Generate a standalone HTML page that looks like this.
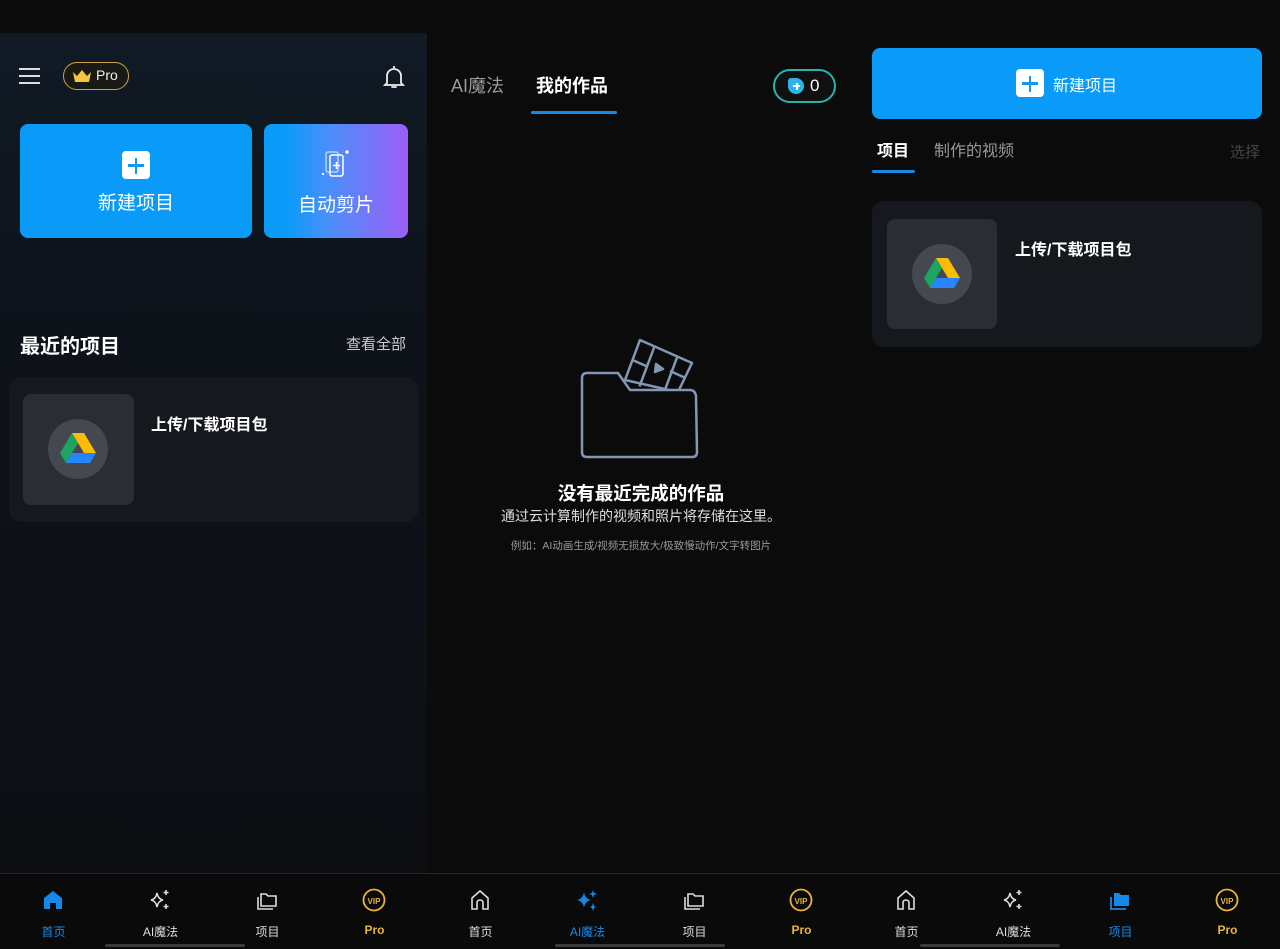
<!DOCTYPE html>
<html><head><meta charset="utf-8"><style>
*{margin:0;padding:0;box-sizing:border-box}
body{width:1280px;height:949px;background:#0b0b0b;position:relative;overflow:hidden;font-family:"Liberation Sans","Noto Sans CJK SC",sans-serif;color:#fff}
.a{position:absolute}
.left{left:0;top:33px;width:427px;height:840px;background:linear-gradient(#111a25,#0e1219 40%,#0c0e12)}
.card{background:#15181d;border-radius:12px}
.thumb{background:#2a2d33;border-radius:8px}
.nav{left:0;top:873px;width:1280px;height:76px;background:#0a0a0a;border-top:1px solid #262626}
.ni{position:absolute;top:0;width:107px;text-align:center}
.ni svg{position:absolute;left:41px;top:14px}
.ni span{position:absolute;left:0;width:107px;top:49px;font-size:12px;color:#ddd}
.bar{position:absolute;top:944px;height:3px;background:#3a3a3a;border-radius:2px}
</style></head><body>
<div class="a left"></div>
<!-- left header -->
<div class="a" style="left:19px;top:68px;width:21px;height:2px;background:#ddd;box-shadow:0 7px 0 #ddd,0 14px 0 #ddd"></div>
<div class="a" style="left:63px;top:62px;width:66px;height:28px;border:1.5px solid #c9a24a;border-radius:14px;background:#1a1a14"></div>
<svg class="a" style="left:72px;top:69px" width="20" height="14" viewBox="0 0 20 14"><path d="M1 3l4 4 5-6 5 6 4-4-2 10H3z" fill="#f5c542"/></svg>
<div class="a" style="left:96px;top:67px;font-size:14px;color:#eee">Pro</div>
<svg class="a" style="left:382px;top:63px" width="24" height="28" viewBox="0 0 24 28" fill="none" stroke="#eee" stroke-width="1.8"><path d="M12 3v2M5 20V13a7 7 0 0114 0v7l2 2H3z"/><path d="M10 24h4" stroke-linecap="round"/></svg>
<!-- buttons -->
<div class="a" style="left:20px;top:124px;width:232px;height:114px;background:#0a9bf9;border-radius:8px"></div>
<div class="a" style="left:122px;top:151px;width:28px;height:28px;background:#fff;border-radius:4px"></div>
<div class="a" style="left:128px;top:164px;width:16px;height:2.5px;background:#0a9bf9"></div>
<div class="a" style="left:134.8px;top:158px;width:2.5px;height:16px;background:#0a9bf9"></div>
<div class="a" style="left:20px;top:188px;width:232px;text-align:center;font-size:19px">新建项目</div>
<div class="a" style="left:264px;top:124px;width:144px;height:114px;background:linear-gradient(90deg,#0a9bf9 15%,#4a8ff9 45%,#9b5ff7);border-radius:8px"></div>
<svg class="a" style="left:320px;top:148px" width="32" height="34" viewBox="0 0 32 34" fill="none" stroke="#fff" stroke-width="1.5"><rect x="6" y="4" width="12" height="20" rx="2" opacity=".6"/><rect x="10" y="7" width="13" height="21" rx="2"/><path d="M16.5 14v7M13 17.5h7"/><path d="M27 2v4M25 4h4M3 25v2M2 26h2"/></svg>
<div class="a" style="left:264px;top:190px;width:144px;text-align:center;font-size:19px">自动剪片</div>
<!-- recent -->
<div class="a" style="left:20px;top:330px;font-size:20px;font-weight:bold">最近的项目</div>
<div class="a" style="left:346px;top:333px;font-size:15px;color:#ccc">查看全部</div>
<div class="a card" style="left:9px;top:377px;width:409px;height:145px"></div>
<div class="a thumb" style="left:23px;top:394px;width:111px;height:111px"></div>
<div class="a" style="left:48px;top:419px;width:60px;height:60px;border-radius:50%;background:#444851"></div>
<svg class="a" style="left:59px;top:432px" width="38" height="32" viewBox="0 0 38 32"><path d="M13 1h12l12 20h-12z" fill="#fbbc04"/><path d="M13 1L1 21l6 10L19 11z" fill="#1ea362"/><path d="M7 31h24l6-10H13z" fill="#2684fc"/></svg>
<div class="a" style="left:151px;top:411px;font-size:16px;font-weight:bold">上传/下载项目包</div>
<!-- middle -->
<div class="a" style="left:451px;top:72px;font-size:18px;color:#999">AI魔法</div>
<div class="a" style="left:536px;top:72px;font-size:18px;font-weight:bold">我的作品</div>
<div class="a" style="left:531px;top:111px;width:86px;height:3px;background:#1589e8;border-radius:2px"></div>
<div class="a" style="left:773px;top:69px;width:63px;height:34px;border:2px solid #27b4b0;border-radius:17px;background:#111"></div>
<div class="a" style="left:788px;top:78px;width:16px;height:16px;border-radius:3px 8px 8px 8px;background:#2ab6ec"></div>
<div class="a" style="left:793px;top:85px;width:7px;height:2px;background:#fff"></div><div class="a" style="left:795.5px;top:82.5px;width:2px;height:7px;background:#fff"></div>
<div class="a" style="left:810px;top:76px;font-size:17px">0</div>
<svg class="a" style="left:578px;top:336px" width="126" height="128" viewBox="0 0 126 128" fill="none" stroke="#8397b5" stroke-width="2.5" stroke-linejoin="round">
<path d="M62 4L114 27L100 56L47 44Z"/>
<path d="M76.5 10.4L61.5 50.4M99.4 20.6L84.4 60.6M54.5 24L69 30.4M106.5 41.5L92 35"/>
<path d="M78 28l7 5-8 3z" fill="#8397b5"/>
<path d="M9 121Q4 121 4 116V42Q4 37 9 37H40L52 54H112Q117 54 118 60L119 116Q119 121 114 121Z" fill="#0b0b0b"/>
</svg>
<div class="a" style="left:427px;top:480px;width:428px;text-align:center;font-size:18.5px;font-weight:bold">没有最近完成的作品</div>
<div class="a" style="left:427px;top:506px;width:428px;text-align:center;font-size:14px;color:#ddd">通过云计算制作的视频和照片将存储在这里。</div>
<div class="a" style="left:427px;top:538px;width:428px;text-align:center;font-size:10.5px;color:#999">例如：AI动画生成/视频无损放大/极致慢动作/文字转图片</div>
<!-- right -->
<div class="a" style="left:872px;top:48px;width:390px;height:71px;background:#0a9bf9;border-radius:8px"></div>
<div class="a" style="left:1016px;top:69px;width:28px;height:28px;background:#fff;border-radius:4px"></div>
<div class="a" style="left:1022px;top:82px;width:16px;height:2.5px;background:#0a9bf9"></div>
<div class="a" style="left:1028.8px;top:76px;width:2.5px;height:16px;background:#0a9bf9"></div>
<div class="a" style="left:1053px;top:72px;font-size:16px">新建项目</div>
<div class="a" style="left:877px;top:137px;font-size:16px;font-weight:bold">项目</div>
<div class="a" style="left:934px;top:137px;font-size:16px;color:#999">制作的视频</div>
<div class="a" style="left:872px;top:170px;width:43px;height:3px;background:#1589e8;border-radius:2px"></div>
<div class="a" style="left:1230px;top:141px;font-size:15px;color:#444">选择</div>
<div class="a card" style="left:872px;top:201px;width:390px;height:146px"></div>
<div class="a thumb" style="left:887px;top:219px;width:110px;height:110px"></div>
<div class="a" style="left:912px;top:244px;width:60px;height:60px;border-radius:50%;background:#444851"></div>
<svg class="a" style="left:923px;top:257px" width="38" height="32" viewBox="0 0 38 32"><path d="M13 1h12l12 20h-12z" fill="#fbbc04"/><path d="M13 1L1 21l6 10L19 11z" fill="#1ea362"/><path d="M7 31h24l6-10H13z" fill="#2684fc"/></svg>
<div class="a" style="left:1015px;top:236px;font-size:16px;font-weight:bold">上传/下载项目包</div>
<!-- nav -->
<div class="a nav">
<div class="ni" style="left:0"><svg width="24" height="24" viewBox="0 0 24 24"><path d="M3 10L12 3l9 7v11H15v-6H9v6H3z" fill="#1589e8"/></svg><span style="color:#1589e8">首页</span></div>
<div class="ni" style="left:107px"><svg width="24" height="24" viewBox="0 0 24 24" fill="none" stroke="#ddd" stroke-width="1.6"><path d="M9 5q1 6 6 7-5 1-6 7-1-6-6-7 5-1 6-7z"/><path d="M18 2v5M15.5 4.5h5M18 16v5M15.5 18.5h5"/></svg><span>AI魔法</span></div>
<div class="ni" style="left:214px"><svg width="24" height="24" viewBox="0 0 24 24" fill="none" stroke="#ddd" stroke-width="1.6"><path d="M6 6h5l2 2h8v10H6z"/><path d="M3 9v12h15"/></svg><span>项目</span></div>
<div class="ni" style="left:321px"><svg width="24" height="24" viewBox="0 0 24 24" fill="none" stroke="#e8b43a" stroke-width="1.8"><circle cx="12" cy="12" r="10.5"/><text x="12" y="16" font-size="8" fill="#e8b43a" stroke="none" text-anchor="middle" font-family="Liberation Sans" font-weight="bold">VIP</text></svg><span style="color:#e8b43a;font-weight:bold">Pro</span></div>
<div class="ni" style="left:427px"><svg width="24" height="24" viewBox="0 0 24 24" fill="none" stroke="#ddd" stroke-width="1.6"><path d="M4 10l8-7 8 7v11h-5v-6q0-3-3-3t-3 3v6H4z"/></svg><span>首页</span></div>
<div class="ni" style="left:534px"><svg width="24" height="24" viewBox="0 0 24 24" fill="#1589e8"><path d="M9 4q1 7 7 8-6 1-7 8-1-7-7-8 6-1 7-8z"/><path d="M18 2l1 3 3 1-3 1-1 3-1-3-3-1 3-1zM18 15l1 3 2 1-2 1-1 3-1-3-2-1 2-1z"/></svg><span style="color:#1589e8">AI魔法</span></div>
<div class="ni" style="left:641px"><svg width="24" height="24" viewBox="0 0 24 24" fill="none" stroke="#ddd" stroke-width="1.6"><path d="M6 6h5l2 2h8v10H6z"/><path d="M3 9v12h15"/></svg><span>项目</span></div>
<div class="ni" style="left:748px"><svg width="24" height="24" viewBox="0 0 24 24" fill="none" stroke="#e8b43a" stroke-width="1.8"><circle cx="12" cy="12" r="10.5"/><text x="12" y="16" font-size="8" fill="#e8b43a" stroke="none" text-anchor="middle" font-family="Liberation Sans" font-weight="bold">VIP</text></svg><span style="color:#e8b43a;font-weight:bold">Pro</span></div>
<div class="ni" style="left:853px"><svg width="24" height="24" viewBox="0 0 24 24" fill="none" stroke="#ddd" stroke-width="1.6"><path d="M4 10l8-7 8 7v11h-5v-6q0-3-3-3t-3 3v6H4z"/></svg><span>首页</span></div>
<div class="ni" style="left:960px"><svg width="24" height="24" viewBox="0 0 24 24" fill="none" stroke="#ddd" stroke-width="1.6"><path d="M9 5q1 6 6 7-5 1-6 7-1-6-6-7 5-1 6-7z"/><path d="M18 2v5M15.5 4.5h5M18 16v5M15.5 18.5h5"/></svg><span>AI魔法</span></div>
<div class="ni" style="left:1067px"><svg width="24" height="24" viewBox="0 0 24 24" fill="#1589e8"><path d="M6 5h5l2 2h8v11H6z"/><path d="M3 9v12h15" fill="none" stroke="#1589e8" stroke-width="1.8"/></svg><span style="color:#1589e8">项目</span></div>
<div class="ni" style="left:1174px"><svg width="24" height="24" viewBox="0 0 24 24" fill="none" stroke="#e8b43a" stroke-width="1.8"><circle cx="12" cy="12" r="10.5"/><text x="12" y="16" font-size="8" fill="#e8b43a" stroke="none" text-anchor="middle" font-family="Liberation Sans" font-weight="bold">VIP</text></svg><span style="color:#e8b43a;font-weight:bold">Pro</span></div>
</div>
<div class="bar" style="left:105px;width:140px"></div>
<div class="bar" style="left:555px;width:170px"></div>
<div class="bar" style="left:920px;width:140px"></div>
</body></html>
